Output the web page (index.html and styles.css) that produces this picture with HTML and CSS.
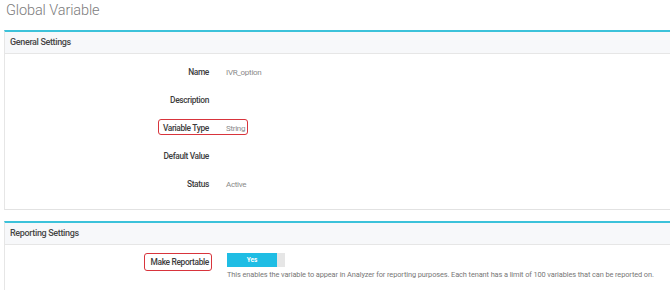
FILE: index.html
```html
<!DOCTYPE html>
<html lang="en">
<head>
    <meta charset="UTF-8">
    <meta name="viewport" content="width=device-width, initial-scale=1.0">
    <title>Global Variable</title>

    <link rel="stylesheet" href="styles.css">
</head>
<body>
    <h1 class="page-title">Global Variable</h1>

    <div class="panel">
        <div class="panel-header">General Settings</div>
        <div class="panel-body">
            <div class="field">
                <div class="label">Name</div>
                <div class="value">IVR_option</div>
            </div>
            <div class="field">
                <div class="label">Description</div>
                <div class="value"></div>
            </div>
            <div class="field">
                <div class="label">Variable Type</div>
                <div class="value">String</div>
                <span class="callout callout-type"></span>
            </div>
            <div class="field">
                <div class="label">Default Value</div>
                <div class="value"></div>
            </div>
            <div class="field">
                <div class="label">Status</div>
                <div class="value">Active</div>
            </div>
        </div>
    </div>

    <div class="panel panel-reporting">
        <div class="panel-header">Reporting Settings</div>
        <div class="panel-body">
            <div class="field field-toggle">
                <div class="label">Make Reportable</div>
                <div class="value">
                    <div class="toggle">
                        <span class="toggle-on">Yes</span>
                        <span class="toggle-off"></span>
                    </div>
                    <p class="help">This enables the variable to appear in Analyzer for reporting purposes. Each tenant has a limit of 100 variables that can be reported on.</p>
                </div>
                <span class="callout callout-report"></span>
            </div>
        </div>
    </div>
</body>
</html>
```

FILE: styles.css
```css
body, html {
    margin: 0;
    padding: 0;
    background-color: #ffffff;
    font-family: Roboto, "Liberation Sans", sans-serif;
    overflow: hidden;
}

body {
    padding-left: 4px;
}

.page-title {
    margin: 0;
    padding-left: 2px;
    font-size: 14.5px;
    font-weight: 300;
    line-height: 22px;
    letter-spacing: -0.1px;
    color: #7c7c7c;
}

.panel {
    margin-top: 8px;
    margin-right: -10px;
    border-top: 2px solid #3cc2da;
    border-left: 1px solid #e6e6e6;
    border-bottom: 1px solid #e2e2e2;
    background-color: #ffffff;
}

.panel-reporting {
    margin-top: 11px;
    border-bottom: none;
}

.panel-header {
    height: 21px;
    line-height: 21px;
    padding-left: 5px;
    background-color: #f7f8fa;
    border-bottom: 1px solid #e6e6e6;
    font-size: 9px;
    font-weight: 500;
    letter-spacing: -0.35px;
    color: #474747;
}

.panel-body {
    padding: 4px 0 11px 0;
}

.field {
    position: relative;
    display: flex;
    align-items: center;
    height: 28px;
}

.label {
    flex: 0 0 204px;
    text-align: right;
    font-size: 8.4px;
    font-weight: 500;
    letter-spacing: -0.35px;
    color: #3c3c3c;
}

.value {
    margin-left: 17px;
    font-size: 8px;
    letter-spacing: -0.3px;
    color: #8a8a8a;
}

.field-toggle {
    align-items: flex-start;
    height: auto;
    padding-top: 4px;
}

.field-toggle .label {
    line-height: 19px;
}

.field-toggle .value {
    margin-left: 18px;
}

.toggle {
    display: flex;
    width: 58px;
    height: 14px;
}

.toggle-on {
    flex: 0 0 50px;
    background-color: #1fbde4;
    color: #ffffff;
    font-size: 6.5px;
    font-weight: 700;
    letter-spacing: 0;
    line-height: 14px;
    text-align: center;
}

.toggle-off {
    flex: 1;
    background-color: #e6e6e6;
}

.help {
    margin: 3px 0 0 0;
    font-size: 7.4px;
    letter-spacing: -0.1px;
    color: #777777;
    white-space: nowrap;
}

/* red annotation boxes */
.callout {
    position: absolute;
    border: 1.5px solid #d8343c;
    border-radius: 3px;
}

.callout-type {
    left: 153px;
    top: 5px;
    width: 88px;
    height: 14px;
}

.callout-report {
    left: 139px;
    top: 4px;
    width: 66px;
    height: 16px;
}
```
